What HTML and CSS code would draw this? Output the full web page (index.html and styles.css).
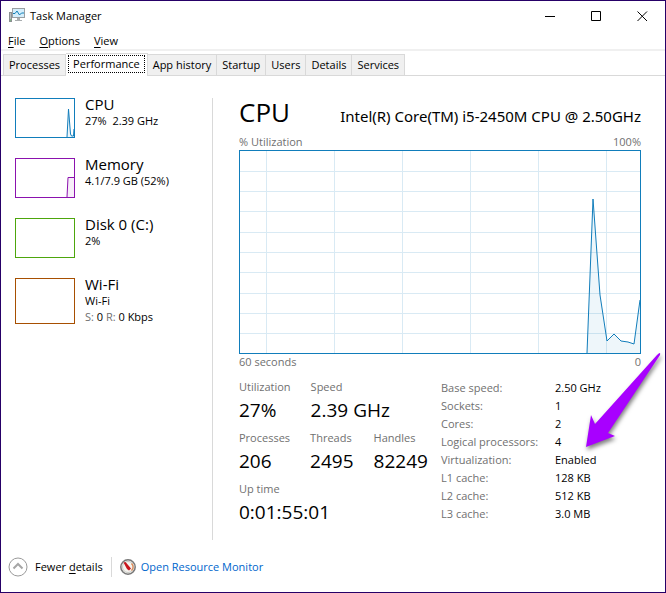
FILE: index.html
```
<!DOCTYPE html>
<html lang="en">
<head>
	<meta charset="utf-8">
	<meta name="viewport" content="width=device-width, initial-scale=1">
	<title>Task Manager</title>

	<link rel="stylesheet" href="styles.css">
</head>
<body>

<div class="window">

	<header class="titlebar">
		<svg class="app-icon" width="16" height="16" viewBox="0 0 16 16">
			<rect x="0.5" y="4.5" width="2" height="9" fill="#b8bcbe" stroke="#8b9092"/>
			<path d="M1 12h1" stroke="#3fae49"/>
			<rect x="3.5" y="0.5" width="12" height="9" fill="#d5eefb" stroke="#9a9fa2"/>
			<path d="M4 5.5h2l2-2.500 2.500 4 2-2h2.500" fill="none" stroke="#1380b8"/>
			<path d="M8 10h3v2h2v1H6v-1h2z" fill="#a9adaf"/>
		</svg>
		<h1 class="title">Task Manager</h1>
		<div class="controls">
			<button type="button" aria-label="Minimize">
				<svg width="11" height="11" viewBox="0 0 11 11"><path d="M0 5.500h10"/></svg>
			</button>
			<button type="button" aria-label="Maximize">
				<svg width="11" height="11" viewBox="0 0 11 11"><path d="M0.500 0.500h9v9h-9z"/></svg>
			</button>
			<button type="button" aria-label="Close">
				<svg width="11" height="11" viewBox="0 0 11 11"><path d="M0.500 0.500l9.500 9.500M10 0.500l-9.500 9.500"/></svg>
			</button>
		</div>
	</header>

	<nav class="menu">
		<button type="button"><u>F</u>ile</button>
		<button type="button"><u>O</u>ptions</button>
		<button type="button"><u>V</u>iew</button>
	</nav>

	<div class="tabs" role="tablist">
		<button type="button" role="tab">Processes</button>
		<button type="button" role="tab" class="selected" aria-selected="true"><span>Performance</span></button>
		<button type="button" role="tab">App history</button>
		<button type="button" role="tab">Startup</button>
		<button type="button" role="tab">Users</button>
		<button type="button" role="tab">Details</button>
		<button type="button" role="tab">Services</button>
	</div>

	<div class="content">

		<ul class="resources">
			<li>
				<svg class="thumb cpu" viewBox="0 0 58 38">
					<path class="area" d="M51 38l1.500-28 2 25 1 2h2l0.500-7v8z"/>
					<path class="line" d="M51 38l1.500-28 2 25 1 2h2l0.500-7"/>
				</svg>
				<div>
					<h2>CPU</h2>
					<p>27%&nbsp; 2.39 GHz</p>
				</div>
			</li>
			<li>
				<svg class="thumb memory" viewBox="0 0 58 38">
					<path class="area" d="M51 38l1-19.500h6V38z"/>
					<path class="line" d="M51 38l1-19.500h6"/>
				</svg>
				<div>
					<h2>Memory</h2>
					<p>4.1/7.9 GB (52%)</p>
				</div>
			</li>
			<li>
				<svg class="thumb disk" viewBox="0 0 58 38"></svg>
				<div>
					<h2>Disk 0 (C:)</h2>
					<p>2%</p>
				</div>
			</li>
			<li>
				<svg class="thumb wifi" viewBox="0 0 58 44"></svg>
				<div>
					<h2>Wi-Fi</h2>
					<p>Wi-Fi</p>
					<p><span class="dim">S:</span> 0 <span class="dim">R:</span> 0 Kbps</p>
				</div>
			</li>
		</ul>

		<main class="detail">
			<div class="heading">
				<h2>CPU</h2>
				<p>Intel(R) Core(TM) i5-2450M CPU @ 2.50GHz</p>
			</div>

			<div class="axis"><span>% Utilization</span><span>100%</span></div>
			<svg class="chart" viewBox="0 0 400 202" preserveAspectRatio="none">
				<path class="grid" d="M26.500 0v202M94.500 0v202M162.500 0v202M230.500 0v202M298.500 0v202M366.500 0v202"/>
				<path class="grid" d="M0 20.500h400M0 40.500h400M0 60.500h400M0 81.500h400M0 101.500h400M0 121.500h400M0 142.500h400M0 162.500h400M0 182.500h400"/>
				<path class="area" d="M347 202L353 48L360 144L367 190L374 183L381 190L388 191L394 193L400 149V202z"/>
				<path class="line" d="M347 202L353 48L360 144L367 190L374 183L381 190L388 191L394 193L400 149"/>
			</svg>
			<div class="axis"><span>60 seconds</span><span>0</span></div>

			<div class="stats">
				<div class="counters">
					<dl class="row">
						<div><dt>Utilization</dt><dd>27%</dd></div>
						<div><dt>Speed</dt><dd>2.39 GHz</dd></div>
					</dl>
					<dl class="row">
						<div><dt>Processes</dt><dd>206</dd></div>
						<div><dt>Threads</dt><dd>2495</dd></div>
						<div><dt>Handles</dt><dd>82249</dd></div>
					</dl>
					<dl class="row">
						<div><dt>Up time</dt><dd>0:01:55:01</dd></div>
					</dl>
				</div>

				<table class="specs">
					<tr><th scope="row">Base speed:</th><td>2.50 GHz</td></tr>
					<tr><th scope="row">Sockets:</th><td>1</td></tr>
					<tr><th scope="row">Cores:</th><td>2</td></tr>
					<tr><th scope="row">Logical processors:</th><td>4</td></tr>
					<tr><th scope="row">Virtualization:</th><td>Enabled</td></tr>
					<tr><th scope="row">L1 cache:</th><td>128 KB</td></tr>
					<tr><th scope="row">L2 cache:</th><td>512 KB</td></tr>
					<tr><th scope="row">L3 cache:</th><td>3.0 MB</td></tr>
				</table>

				<svg class="arrow" width="84" height="104" viewBox="0 0 84 104">
					<path d="M4 98L9 66L13 75L75 6Q79 2 78 6L26 84L33 87z"/>
				</svg>
			</div>
		</main>
	</div>

	<footer class="footer">
		<button type="button" class="fewer">
			<svg width="20" height="20" viewBox="0 0 20 20">
				<circle cx="10" cy="10" r="9" fill="none" stroke="#9a9a9a"/>
				<path d="M5.500 11.500L10 7l4.500 4.500" fill="none" stroke="#a6a6a6" stroke-width="2"/>
			</svg>
			<span>Fewer <u>d</u>etails</span>
		</button>
		<a href="#" class="monitor">
			<svg width="16" height="16" viewBox="0 0 16 16">
				<circle cx="8" cy="8" r="7.200" fill="#f5f4ef" stroke="#777" stroke-width="1.500"/>
				<circle cx="8" cy="8" r="5.500" fill="none" stroke="#c9c9c5"/>
				<path d="M11.500 4.500a5 5 0 0 1 0 7" fill="none" stroke="#e08a55" stroke-width="1.500"/>
				<path d="M3.500 3.500L5.500 3L11 9.500L9 11.500L7 10z" fill="#c8141b"/>
			</svg>
			<span>Open Resource Monitor</span>
		</a>
	</footer>

</div>

</body>
</html>
```
FILE: styles.css
```
* {
	box-sizing: border-box;
}

body {
	margin: 0;
	font: 11px/16px "Segoe UI", "Open Sans", "Noto Sans", sans-serif;
	color: #000;
	background: #fff;
}

h1, h2, p, ul, dl, dd {
	margin: 0;
	padding: 0;
	font-weight: normal;
}

button {
	border: 0;
	padding: 0;
	background: none;
	font: inherit;
	color: inherit;
}

svg {
	display: block;
	flex: none;
}

u {
	text-underline-offset: 2px;
}

.window {
	display: flex;
	flex-direction: column;
	min-height: 100vh;
	border: 1px solid #260067;
}

/* Title bar */

.titlebar {
	display: flex;
	align-items: center;
	height: 30px;
	padding-left: 8px;
}

.title {
	margin-left: 5px;
	font-size: 11px;
}

.controls {
	display: flex;
	margin-left: auto;
}

.controls button {
	display: flex;
	align-items: center;
	justify-content: center;
	width: 46px;
	height: 30px;
}

.controls path {
	fill: none;
	stroke: #000;
}

/* Menu */

.menu {
	display: flex;
	gap: 14px;
	padding: 2px 7px 0;
	border-bottom: 2px solid #f0f0f0;
}

/* Tabs */

.tabs {
	display: flex;
	align-items: flex-end;
	padding: 2px 2px 0;
	border-bottom: 1px solid #d9d9d9;
}

.tabs button {
	height: 21px;
	padding: 0 5px;
	border: 1px solid #d9d9d9;
	border-width: 1px 1px 0 0;
	background: #f0f0f0;
}

.tabs button:first-child {
	border-left-width: 1px;
}

.tabs .selected {
	height: 23px;
	margin-bottom: -1px;
	padding: 0 2px 2px;
	background: #fff;
}

.tabs .selected span {
	display: block;
	padding: 0 4px;
	border: 1px dotted #000;
}

/* Content */

.content {
	display: flex;
	flex: 1;
	padding: 22px 24px 0 14px;
}

.resources {
	flex: none;
	width: 198px;
	border-right: 1px solid #d9d9d9;
	list-style: none;
}

.resources li {
	display: flex;
	gap: 10px;
	min-height: 60px;
}

.resources h2 {
	font-size: 15px;
	line-height: 12px;
	padding-bottom: 3px;
}

.dim {
	color: #707070;
}

.thumb {
	width: 60px;
	height: 40px;
	border: 1px solid;
}

.thumb.wifi {
	height: 46px;
}

.cpu, .chart {
	color: #117dbb;
}

.memory {
	color: #8b12ae;
}

.disk {
	color: #4da60c;
}

.wifi {
	color: #a74f01;
}

.area {
	fill: currentColor;
	fill-opacity: 0.07;
}

.line {
	fill: none;
	stroke: currentColor;
	vector-effect: non-scaling-stroke;
}

/* Detail pane */

.detail {
	flex: 1;
	min-width: 0;
	padding-left: 26px;
}

.heading {
	display: flex;
	align-items: baseline;
	justify-content: space-between;
	line-height: 28px;
	padding-bottom: 4px;
}

.heading h2 {
	font-size: 26px;
}

.heading p {
	font-family: "Segoe UI", "Noto Sans", sans-serif;
	font-size: 15px;
}

.axis {
	display: flex;
	justify-content: space-between;
	color: #707070;
}

.chart {
	width: 100%;
	height: 204px;
	border: 1px solid;
}

.grid {
	stroke: #d9eaf4;
	vector-effect: non-scaling-stroke;
}

/* Counters */

.stats {
	display: flex;
	position: relative;
	padding-top: 9px;
}

.counters {
	flex: 1;
}

.row {
	display: flex;
	gap: 20px;
	height: 51px;
}

dt {
	color: #707070;
}

dd {
	font-size: 19px;
	line-height: 30px;
}

.specs {
	flex: none;
	width: 200px;
	height: 144px;
	border-collapse: collapse;
}

.specs th, .specs td {
	padding: 0;
	line-height: 18px;
	font-weight: normal;
	text-align: left;
}

.specs th {
	width: 114px;
	color: #707070;
}

/* Callout over the Virtualization row */

.arrow {
	position: absolute;
	top: -21px;
	right: -25px;
	filter: drop-shadow(1px 3px 2px rgba(0, 0, 0, 0.5));
}

.arrow path {
	fill: #a800ff;
}

/* Footer */

.footer {
	display: flex;
	align-items: center;
	height: 52px;
	padding: 2px 0 0 7px;
}

.fewer, .monitor {
	display: flex;
	align-items: center;
}

.fewer {
	gap: 7px;
	padding-right: 8px;
	border-right: 1px solid #d9d9d9;
}

.monitor {
	gap: 5px;
	padding-left: 8px;
	color: #0066cc;
	text-decoration: none;
}
```
